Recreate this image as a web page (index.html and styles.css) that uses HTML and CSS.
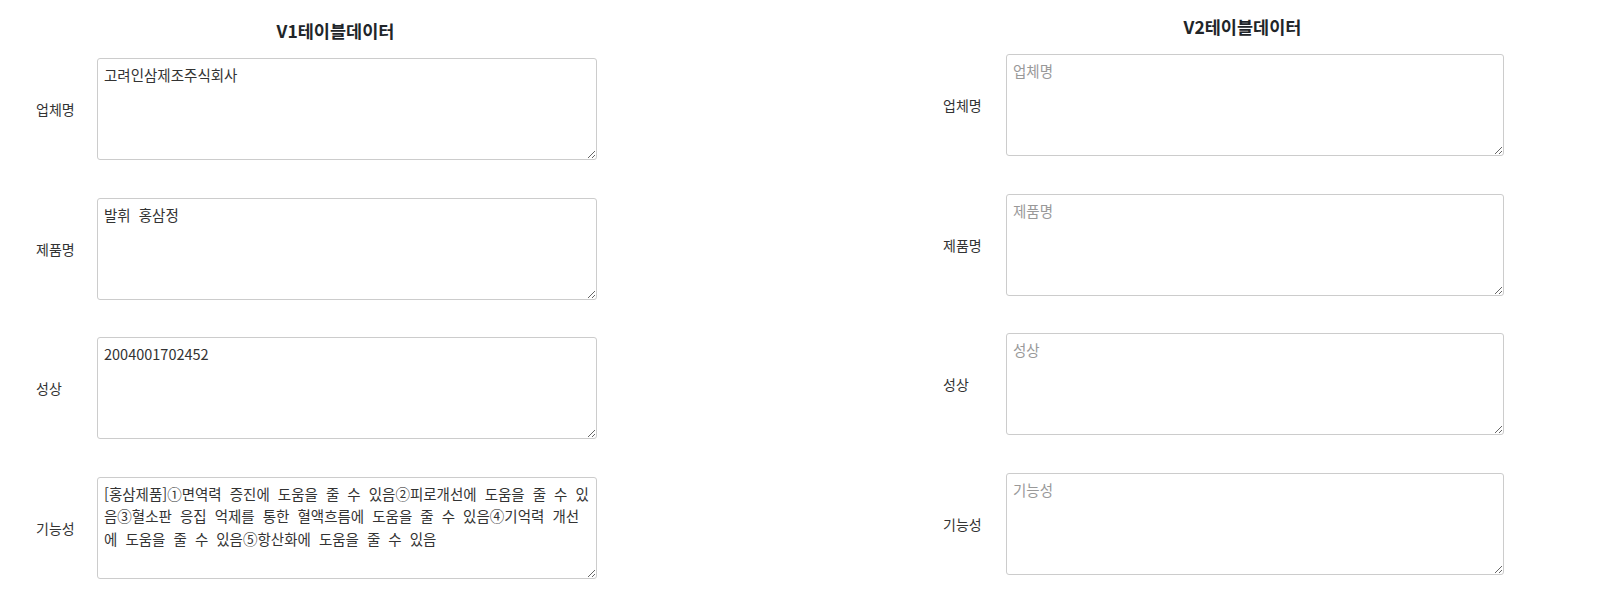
FILE: index.html
```html
<!DOCTYPE html>
<html lang="ko">
<head>
    <meta charset="UTF-8">
    <meta name="viewport" content="width=device-width, initial-scale=1.0">
    <title>테이블데이터 비교</title>
    <link rel="stylesheet" href="styles.css">
</head>
<body>
    <div class="compare">
        <!-- V1 -->
        <div class="panel panel-v1">
            <h3 class="panel-title">V1테이블데이터</h3>
            <div class="field">
                <label>업체명</label>
                <textarea placeholder="업체명">고려인삼제조주식회사</textarea>
            </div>
            <div class="field">
                <label>제품명</label>
                <textarea placeholder="제품명">발휘 홍삼정</textarea>
            </div>
            <div class="field">
                <label>성상</label>
                <textarea placeholder="성상">2004001702452</textarea>
            </div>
            <div class="field">
                <label>기능성</label>
                <textarea placeholder="기능성">[홍삼제품]①면역력 증진에 도움을 줄 수 있음②피로개선에 도움을 줄 수 있음③혈소판 응집 억제를 통한 혈액흐름에 도움을 줄 수 있음④기억력 개선에 도움을 줄 수 있음⑤항산화에 도움을 줄 수 있음</textarea>
            </div>
        </div>

        <!-- V2 -->
        <div class="panel panel-v2">
            <h3 class="panel-title">V2테이블데이터</h3>
            <div class="field">
                <label>업체명</label>
                <textarea placeholder="업체명"></textarea>
            </div>
            <div class="field">
                <label>제품명</label>
                <textarea placeholder="제품명"></textarea>
            </div>
            <div class="field">
                <label>성상</label>
                <textarea placeholder="성상"></textarea>
            </div>
            <div class="field">
                <label>기능성</label>
                <textarea placeholder="기능성"></textarea>
            </div>
        </div>
    </div>
</body>
</html>
```

FILE: styles.css
```css
body {
    font-family: "Noto Sans CJK KR", "Noto Sans", sans-serif;
    margin: 0;
    color: #212529;
    background: #fff;
}
.compare {
    display: flex;
    padding-left: 36px;
    gap: 308px;
}
.panel {
    width: 599px;
    padding-top: 14px;
}
.panel-v1 {
    padding-top: 19px;
}
.panel-title {
    font-size: 17.5px;
    font-weight: bold;
    text-align: center;
    margin: 0 0 15px 0;
    line-height: 24px;
}
.panel-v2 .panel-title {
    margin-top: 1px;
}
.field {
    display: grid;
    grid-template-columns: 61px 500px;
    align-items: center;
    margin-bottom: 37.5px;
}
.panel-v2 .field {
    grid-template-columns: 63px 498px;
}
.field label {
    font-size: 14px;
    color: #333;
}
.field textarea {
    box-sizing: border-box;
    width: 100%;
    height: 102px;
    padding: 5px 6px;
    border: 1px solid #ccc;
    border-radius: 3px;
    font-family: "Noto Sans CJK KR", "Noto Sans", sans-serif;
    font-size: 14.5px;
    line-height: 22.5px;
    word-spacing: 4px;
    color: #333;
}
.field textarea::placeholder {
    color: #999;
}
```
